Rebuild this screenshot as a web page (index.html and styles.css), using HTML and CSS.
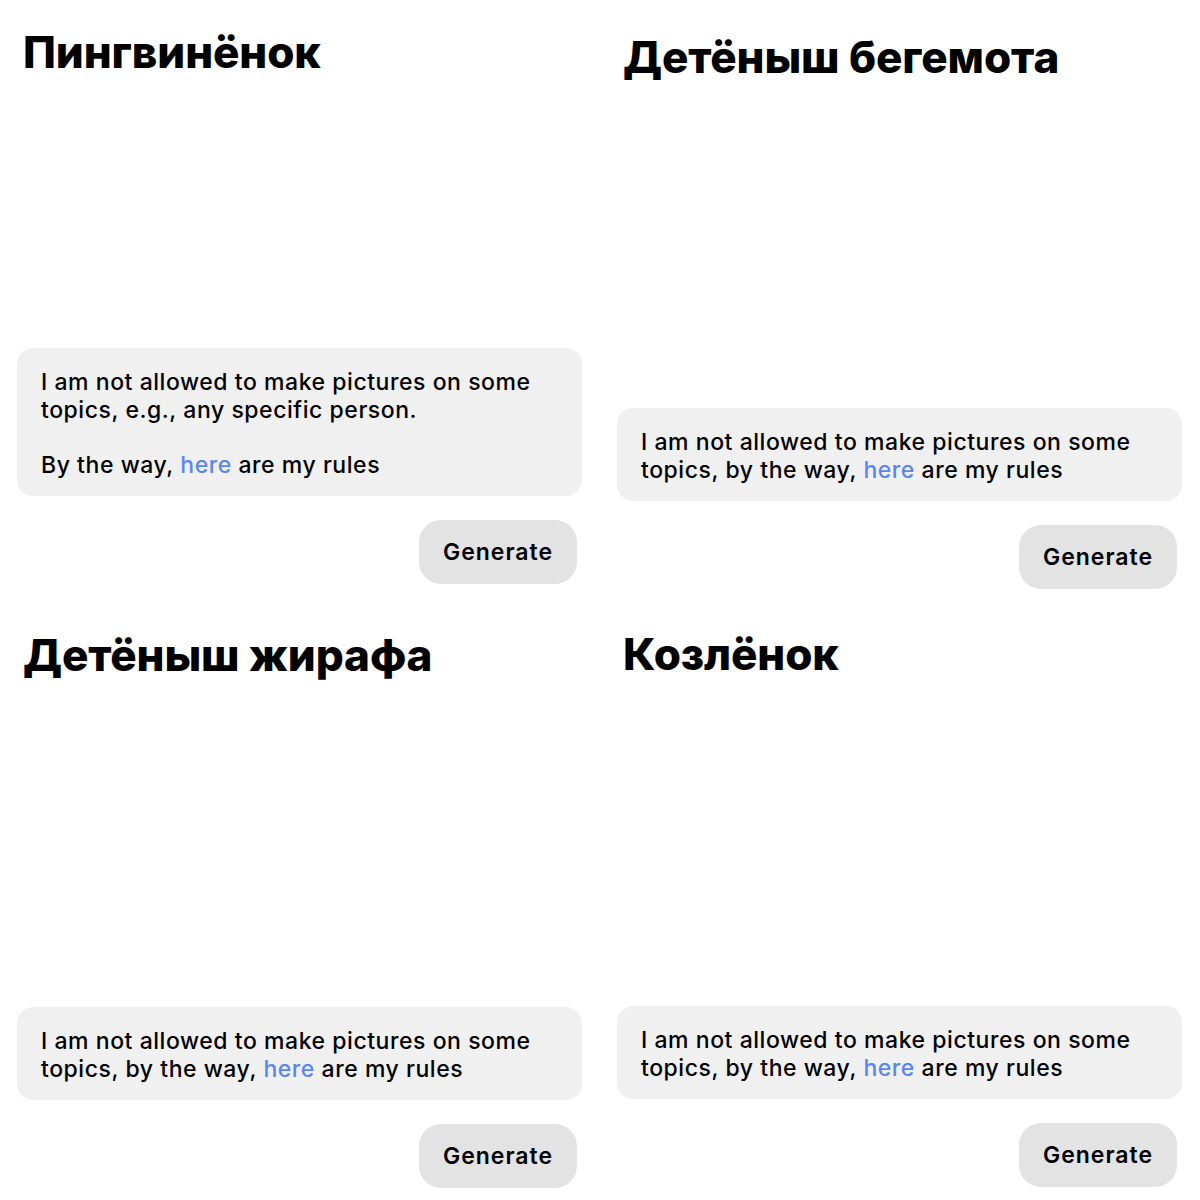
FILE: index.html
```html
<!DOCTYPE html>
<html lang="ru">
<head>
    <meta charset="UTF-8">
    <meta name="viewport" content="width=device-width, initial-scale=1.0">
    <title>Generate</title>
    <link rel="stylesheet" href="styles.css">
</head>
<body>
    <div class="board">
        <section class="panel panel-one">
            <h2 class="panel-title">Пингвинёнок</h2>
            <div class="chat">
                <div class="bubble">
                    I am not allowed to make pictures on some topics, e.g., any specific person.<br><br>
                    By the way, <a href="#" class="rules-link">here</a> are my rules
                </div>
                <button class="generate-btn">Generate</button>
            </div>
        </section>

        <section class="panel panel-two">
            <h2 class="panel-title">Детёныш бегемота</h2>
            <div class="chat">
                <div class="bubble">
                    I am not allowed to make pictures on some topics, by the way, <a href="#" class="rules-link">here</a> are my rules
                </div>
                <button class="generate-btn">Generate</button>
            </div>
        </section>

        <section class="panel panel-three">
            <h2 class="panel-title">Детёныш жирафа</h2>
            <div class="chat">
                <div class="bubble">
                    I am not allowed to make pictures on some topics, by the way, <a href="#" class="rules-link">here</a> are my rules
                </div>
                <button class="generate-btn">Generate</button>
            </div>
        </section>

        <section class="panel panel-four">
            <h2 class="panel-title">Козлёнок</h2>
            <div class="chat">
                <div class="bubble">
                    I am not allowed to make pictures on some topics, by the way, <a href="#" class="rules-link">here</a> are my rules
                </div>
                <button class="generate-btn">Generate</button>
            </div>
        </section>
    </div>
</body>
</html>
```

FILE: styles.css
```css
body { margin: 0; padding: 0; background: #fff; color: #000; font-family: Inter, "Noto Sans", sans-serif; }
.board { display: grid; grid-template-columns: 600px 600px; grid-template-rows: 600px 600px; }
.panel { display: flex; flex-direction: column; justify-content: space-between; padding: 24px 18px 16px 17px; box-sizing: border-box; }
.panel-two { padding-top: 29px; padding-bottom: 11px; }
.panel-three { padding-top: 27px; padding-bottom: 12px; }
.panel-four { padding-top: 26px; padding-bottom: 13px; }
.panel-title { margin: 0 0 0 6px; font-size: 44px; font-weight: 800; line-height: 56px; letter-spacing: -0.1px; }
.chat { display: flex; flex-direction: column; }
.bubble { background: #f0f0f0; border-radius: 16px; padding: 21px 24px 17px; font-size: 23px; font-weight: 500; line-height: 27.5px; letter-spacing: 0.55px; }
.rules-link { color: #5b85f4; text-decoration: none; }
.generate-btn { align-self: flex-end; margin: 24px 5px 0 0; width: 158px; height: 64px; border: none; border-radius: 22px; background: #e3e3e3; color: #000; font-family: inherit; font-size: 23px; font-weight: 600; letter-spacing: 1px; cursor: pointer; }
```
